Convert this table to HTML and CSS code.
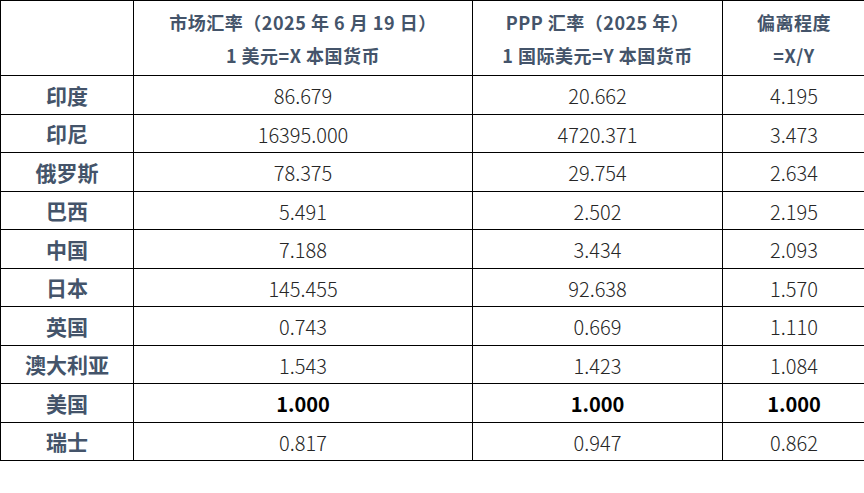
FILE: index.html
```html
<!DOCTYPE html>
<html lang="zh-CN">
<head>
<meta charset="utf-8">
<title>汇率偏离程度</title>
<link rel="stylesheet" href="styles.css">
</head>
<body>
<table class="fx">
  <colgroup>
    <col class="c-name"><col class="c-mkt"><col class="c-ppp"><col class="c-dev">
  </colgroup>
  <thead>
    <tr>
      <th></th>
      <th>市场汇率（2025 年 6 月 19 日）<br>1 美元=X 本国货币</th>
      <th>PPP 汇率（2025 年）<br>1 国际美元=Y 本国货币</th>
      <th>偏离程度<br>=X/Y</th>
    </tr>
  </thead>
  <tbody>
    <tr><th>印度</th><td>86.679</td><td>20.662</td><td>4.195</td></tr>
    <tr><th>印尼</th><td>16395.000</td><td>4720.371</td><td>3.473</td></tr>
    <tr><th>俄罗斯</th><td>78.375</td><td>29.754</td><td>2.634</td></tr>
    <tr><th>巴西</th><td>5.491</td><td>2.502</td><td>2.195</td></tr>
    <tr><th>中国</th><td>7.188</td><td>3.434</td><td>2.093</td></tr>
    <tr><th>日本</th><td>145.455</td><td>92.638</td><td>1.570</td></tr>
    <tr><th>英国</th><td>0.743</td><td>0.669</td><td>1.110</td></tr>
    <tr><th>澳大利亚</th><td>1.543</td><td>1.423</td><td>1.084</td></tr>
    <tr class="base"><th>美国</th><td>1.000</td><td>1.000</td><td>1.000</td></tr>
    <tr><th>瑞士</th><td>0.817</td><td>0.947</td><td>0.862</td></tr>
  </tbody>
</table>
</body>
</html>
```
FILE: styles.css
```css
html, body {
  margin: 0;
  padding: 0;
  background: #ffffff;
  overflow: hidden;
}
body {
  font-family: "Noto Sans CJK SC", "Noto Sans", sans-serif;
}
.fx {
  border-collapse: collapse;
  table-layout: fixed;
  width: 865px;
}
.c-name { width: 133px; }
.c-mkt { width: 339px; }
.c-ppp { width: 250px; }
.c-dev { width: 143px; }
.fx th, .fx td {
  border: 1px solid #000;
  text-align: center;
  vertical-align: middle;
  padding: 0;
}
.fx thead th {
  height: 72px;
  font-size: 18px;
  font-weight: 700;
  line-height: 33px;
  letter-spacing: 0.5px;
  color: #44546a;
  padding-top: 2px;
  white-space: nowrap;
}
.fx tbody tr {
  height: 38.5px;
}
.fx tbody th {
  font-size: 21px;
  font-weight: 700;
  color: #44546a;
}
.fx tbody td {
  font-size: 20px;
  font-weight: 300;
  color: #262626;
  padding-top: 2px;
}
.fx tr.base td {
  font-weight: 700;
  color: #000;
}
```
